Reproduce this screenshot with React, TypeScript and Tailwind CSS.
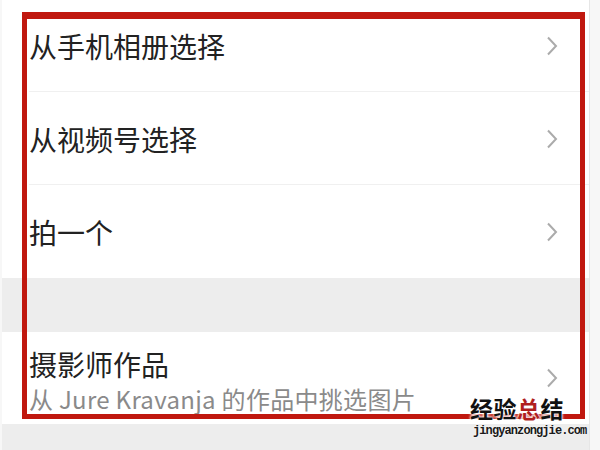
import React from "react";

const Chevron = () => (
  <svg width="12" height="20" viewBox="0 0 12 20" className="shrink-0">
    <polyline points="2,1.5 10,10 2,18.5" fill="none" stroke="#ababab" strokeWidth="2" />
  </svg>
);

const Row = ({ label, divider }: { label: string; divider?: boolean }) => (
  <div className="relative h-[93px] bg-white flex items-center justify-between pl-[27px] pr-[31px]">
    <span className="text-[28px] leading-none text-[#222]">{label}</span>
    <Chevron />
    {divider && <div className="absolute left-[27px] right-0 bottom-0 h-px bg-[#f0f0f0]" />}
  </div>
);

export default function App() {
  return (
    <div
      className="relative w-[600px] h-[450px] overflow-hidden bg-[#f7f7f7]"
      style={{ fontFamily: '"Noto Sans CJK SC", "Noto Sans", sans-serif' }}
    >
      <div className="ml-[2px] w-[588px] h-[450px] bg-[#ededed] flex flex-col border-r border-[#e6e6e6]">
        <div className="-mt-[1px]">
          <Row label="从手机相册选择" divider />
          <Row label="从视频号选择" divider />
          <Row label="拍一个" />
        </div>
        <div className="h-[54px] bg-[#ededed]" />
        <div className="h-[92px] bg-white flex items-center justify-between pl-[27px] pr-[31px]">
          <div className="flex flex-col gap-[5px] pt-[6px]">
            <span className="text-[28px] leading-[30px] text-[#222]">摄影师作品</span>
            <span className="text-[24px] leading-[30px] text-[#8a8a8a] tracking-[0.3px]">从 Jure Kravanja 的作品中挑选图片</span>
          </div>
          <Chevron />
        </div>
      </div>

      {/* red annotation rectangle */}
      <div className="absolute left-[22px] top-[12px] w-[563px] h-[407px] border-[5px] border-[#c0180f] border-t-[7px] pointer-events-none" />

      {/* watermark */}
      <div
        className="absolute left-[470px] top-[396px] text-[23px] font-bold leading-[24px] tracking-[0.5px] whitespace-nowrap"
        style={{ textShadow: "0 0 3px #fff, 0 0 3px #fff, 0 0 2px #fff" }}
      >
        <span className="text-[#111]">经验</span>
        <span className="text-[#b01f1f]">总</span>
        <span className="text-[#111]">结</span>
      </div>
      <div
        className="absolute left-[473px] top-[424px] text-[12px] leading-[14px] font-bold text-[#1a1a1a] tracking-[-0.9px] whitespace-nowrap"
        style={{ fontFamily: '"Liberation Mono", monospace', textShadow: "0 0 2px #fff" }}
      >
        jingyanzongjie.com
      </div>
    </div>
  );
}
